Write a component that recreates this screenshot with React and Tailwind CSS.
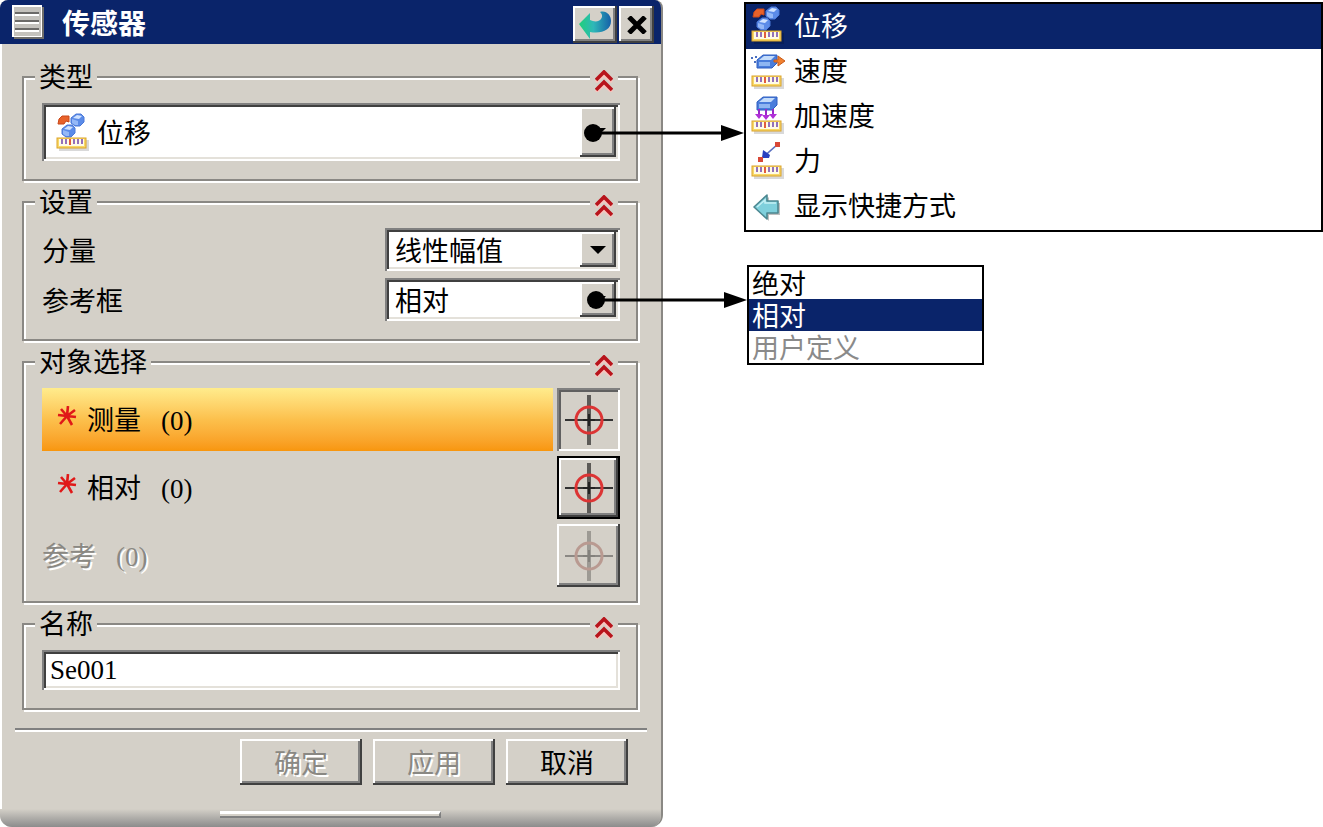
import { useState } from 'react'

const sunken = 'shadow-[inset_2px_2px_0_#808080,inset_-2px_-2px_0_#fff,inset_4px_4px_0_#404040,inset_-4px_-4px_0_#e4e1da]'
const raised = 'shadow-[inset_-2px_-2px_0_#404040,inset_2px_2px_0_#fff,inset_-4px_-4px_0_#808080]'
const embossed = 'text-[#8a8883] [text-shadow:2px_2px_0_#fff]'

function Ruler() {
  return (
    <g>
      <rect x="3" y="27" width="30" height="11" fill="#000" opacity="0.15" />
      <rect x="1" y="25" width="29" height="10" fill="#f8d868" stroke="#dba32a" />
      <rect x="3" y="26" width="25" height="7" fill="#fffbe6" />
      <path d="M6 26v5M10 26v5M18 26v5M22 26v5M26 26v5" stroke="#7a4fb0" strokeWidth="1.6" />
      <path d="M14 26v6" stroke="#e04a2a" strokeWidth="1.8" />
    </g>
  )
}

function Cube({ x, y }) {
  return (
    <g transform={`translate(${x} ${y})`}>
      <path d="M0 4L5 0H10L13 3V8L9 12H4L0 9Z" fill="#5b8be8" stroke="#4a78d8" strokeLinejoin="round" />
      <path d="M2 4L6 1L11 2L8 5Z" fill="#cfe2ff" />
      <path d="M1 5L7 7V11H4L1 9Z" fill="#94b8f7" />
    </g>
  )
}

function Block({ x, y }) {
  return (
    <g transform={`translate(${x} ${y})`}>
      <path d="M0 5L6 0H20V8L15 13H0Z" fill="#4a7ddb" stroke="#2f5fc0" strokeLinejoin="round" />
      <path d="M2 5L7 1H18L14 5Z" fill="#c4dcfa" />
      <path d="M2 7H13V11H2Z" fill="#8fb6f2" />
    </g>
  )
}

function Icon({ kind }) {
  return (
    <svg className="h-[38px] w-[34px] shrink-0" viewBox="0 0 34 38" aria-hidden="true">
      {kind === 'displacement' && (
        <g>
          <path d="M2 11L3 6L6 3H13V9L10 8L8 11Z" fill="#e8622a" stroke="#c9481a" strokeLinejoin="round" />
          <Cube x={15} y={1} />
          <Cube x={6} y={12} />
          <Ruler />
        </g>
      )}
      {kind === 'velocity' && (
        <g>
          <path d="M0 7h2M3 11h2M4 6h2" stroke="#4a6fc0" strokeWidth="2" />
          <Block x={6} y={4} />
          <path d="M23 9H27V5L34 10L27 15V11H23Z" fill="#f08030" stroke="#c85a18" strokeLinejoin="round" />
          <Ruler />
        </g>
      )}
      {kind === 'acceleration' && (
        <g>
          <Block x={6} y={1} />
          <path d="M8 13v7M15 13v9M22 13v7" stroke="#9a28c8" strokeWidth="2" />
          <path d="M4 18h8l-4 5zM11 19h8l-4 5zM18 18h8l-4 5z" fill="#b030d8" />
          <Ruler />
        </g>
      )}
      {kind === 'force' && (
        <g>
          <path d="M27 3L10 18" stroke="#5a70c0" strokeWidth="1.6" />
          <path d="M11 17L12 9L15 11L19 14L18 17Z" fill="#2840c0" />
          <rect x="24" y="1" width="5" height="5" fill="#d84838" />
          <rect x="7" y="16" width="5" height="5" fill="#d84838" />
          <Ruler />
        </g>
      )}
      {kind === 'shortcut' && (
        <g>
          <path d="M5 22L18 11V17H29V29H18V35Z" fill="#000" opacity="0.25" />
          <path d="M3 21L16 9V15H27V27H16V33Z" fill="#7fd0dc" stroke="#4c8790" strokeWidth="1.6" strokeLinejoin="round" />
          <path d="M6 21L14 14V17H25" fill="none" stroke="#c5f0f4" strokeWidth="1.5" />
        </g>
      )}
    </svg>
  )
}

function Target({ disabled }) {
  return (
    <svg className="h-[52px] w-[50px]" viewBox="0 0 50 52" opacity={disabled ? 0.45 : 1} aria-hidden="true">
      <path d="M25 1V51" stroke="#5c5a57" strokeWidth="4" />
      <path d="M1 26H49" stroke="#333" strokeWidth="2" />
      <circle cx="25" cy="26" r="13" fill="none" stroke={disabled ? '#9a5a50' : '#dc3434'} strokeWidth="3" />
      <path d="M19 26H31M25 20V32" stroke="#222" strokeWidth="2" />
    </svg>
  )
}

function Star() {
  return (
    <svg className="mb-2 h-5 w-5 shrink-0" viewBox="0 0 20 20" aria-hidden="true">
      <path d="M10 10L11 0M10 10L18 4M10 10L19 11M10 10L15 19M10 10L3 18M10 10L1 9M10 10L4 3" stroke="#e01818" strokeWidth="2.6" />
    </svg>
  )
}

function Group({ title, children, className = 'pb-[18px]' }) {
  return (
    <div className="relative">
      <fieldset className={`min-w-0 border-2 border-[#8a8884] pr-4 pl-[18px] shadow-[2px_2px_0_#fff,inset_2px_2px_0_#fff] ${className}`}>
        <legend className="-ml-[7px] h-[30px] bg-[#d4d0c8] px-1 leading-[28px]">{title}</legend>
        <div className="pt-[11px]">{children}</div>
      </fieldset>
      <button type="button" aria-label={`收起${title}`} className="absolute top-0 right-5 flex h-[34px] w-7 items-center justify-center bg-[#d4d0c8]">
        <svg className="mt-1 h-[22px] w-[18px]" viewBox="0 0 18 22" fill="none" aria-hidden="true">
          <path d="M1 12L9 5L17 12M1 22L9 15L17 22" stroke="#f8c4be" strokeWidth="3" />
          <path d="M1 10L9 2L17 10M1 20L9 12L17 20" stroke="#b8141c" strokeWidth="3.6" />
        </svg>
      </button>
    </div>
  )
}

function Combo({ id, label, icon, options, value, onChange, className }) {
  return (
    <div className={`flex items-stretch bg-white p-1 ${sunken} ${className}`}>
      {icon && <div className="flex items-center pr-[1px] pl-[10px]"><Icon kind={icon} /></div>}
      <select
        id={id} aria-label={label} value={value} onChange={(e) => onChange(e.target.value)}
        className="min-w-0 flex-1 appearance-none bg-transparent pl-[6px] outline-none"
      >
        {options.map((o) => <option key={o}>{o}</option>)}
      </select>
      <span className={`pointer-events-none flex w-9 items-center justify-center bg-[#d4d0c8] ${raised}`}>
        <svg className="h-2 w-4" viewBox="0 0 16 8" aria-hidden="true"><path d="M0 0H16L8 8Z" /></svg>
      </span>
    </div>
  )
}

// line with a round start and an arrow head, reaching back from a list to its combo box
function Connector({ className }) {
  return (
    <svg className={`pointer-events-none absolute right-full mr-[2px] h-5 w-40 ${className}`} viewBox="0 0 160 20" aria-hidden="true">
      <circle cx="9" cy="10" r="9" />
      <path d="M9 10H142" stroke="#000" strokeWidth="3" />
      <path d="M137 2L160 10L137 18Z" />
    </svg>
  )
}

const types = [
  ['displacement', '位移'],
  ['velocity', '速度'],
  ['acceleration', '加速度'],
  ['force', '力'],
  ['shortcut', '显示快捷方式'],
]

const targets = [
  {
    name: '测量', required: true,
    row: 'bg-linear-to-b from-[#ffec8c] via-[#fcc04c] to-[#f8960c]',
    button: 'shadow-[inset_2px_2px_0_#808080,inset_-2px_-2px_0_#fff,inset_4px_4px_0_#606060]',
  },
  {
    name: '相对', required: true, row: '',
    button: 'border-2 border-black shadow-[inset_-2px_-2px_0_#404040,inset_2px_2px_0_#fff,inset_-4px_-4px_0_#808080]',
  },
  { name: '参考', required: false, row: '', button: raised },
]

export default function App() {
  const [type, setType] = useState('位移')
  const [component, setComponent] = useState('线性幅值')
  const [frame, setFrame] = useState('相对')
  const [name, setName] = useState('Se001')

  return (
    <main className="flex min-h-screen items-start gap-[81px] bg-white font-['Noto_Sans_CJK_SC',sans-serif] text-[27px] leading-8 text-black">
      <form className="min-w-0 flex-[661] overflow-hidden rounded-t-lg rounded-b-xl border-r-2 border-[#8a8884] bg-[#d4d0c8]" onSubmit={(e) => e.preventDefault()}>
        <header className="-mr-[2px] flex h-11 items-center bg-[#0a246a] pr-[9px] pl-3">
          <svg className="h-[34px] w-8" viewBox="0 0 32 34" aria-hidden="true">
            <rect x="2" y="2" width="30" height="32" fill="#6f6e6b" />
            <rect width="30" height="32" fill="#fff" />
            <rect x="2" y="2" width="27" height="29" fill="#c4c2bd" />
            <path d="M3 8H27M3 16H27M3 24H27" stroke="#6b6a68" strokeWidth="2" />
            <path d="M3 10H27M3 18H27M3 26H27" stroke="#fff" strokeWidth="2" />
          </svg>
          <h1 className="ml-[18px] flex-1 text-[28px] font-bold text-white">传感器</h1>
          <div className="flex gap-[2px] pt-[5px]">
            <button type="button" aria-label="重置" className={`flex h-[37px] w-11 items-center justify-center bg-[#d4d0c8] ${raised}`}>
              <svg className="h-[30px] w-[34px]" viewBox="0 0 34 30" aria-hidden="true">
                <defs>
                  <linearGradient id="reset" x1="0" x2="1">
                    <stop offset="0" stopColor="#1fd07a" />
                    <stop offset="0.45" stopColor="#2fb8b8" />
                    <stop offset="1" stopColor="#1560a8" />
                  </linearGradient>
                </defs>
                <path d="M1 14L12 3V10C16 12 21 12 23 9C25 6 24 4 22 2C28 0 33 5 33 11C33 20 24 24 12 22V29Z" fill="url(#reset)" />
              </svg>
            </button>
            <button type="button" aria-label="关闭" className={`flex h-[37px] w-[35px] items-center justify-center bg-[#d4d0c8] ${raised}`}>
              <svg className="h-[18px] w-5" viewBox="0 0 20 18" aria-hidden="true">
                <path d="M2 1L18 17M18 1L2 17" stroke="#000" strokeWidth="5" />
              </svg>
            </button>
          </div>
        </header>

        <div className="border-l-2 border-white pb-6">
          <div className="flex flex-col gap-[6px] pt-[18px] pr-[23px] pl-5">
            <Group title="类型">
              <Combo label="类型" icon="displacement" options={types.map((t) => t[1])} value={type} onChange={setType} className="h-[58px]" />
            </Group>

            <Group title="设置">
              <div className="flex flex-col gap-[7px]">
                <div className="flex items-center justify-between">
                  <label htmlFor="component">分量</label>
                  <Combo id="component" options={['线性幅值']} value={component} onChange={setComponent} className="h-[43px] w-[235px]" />
                </div>
                <div className="flex items-center justify-between">
                  <label htmlFor="frame">参考框</label>
                  <Combo id="frame" options={['绝对', '相对', '用户定义']} value={frame} onChange={setFrame} className="h-[43px] w-[235px]" />
                </div>
              </div>
            </Group>

            <Group title="对象选择" className="pb-[14px]">
              <div className="flex flex-col gap-[5px]">
                {targets.map((t) => (
                  <div key={t.name} className="flex h-[63px] gap-1">
                    <div className={`flex flex-1 items-center gap-[10px] ${t.row} ${t.required ? 'pl-[15px]' : embossed}`}>
                      {t.required && <Star />}
                      <span>{t.name}<span className="ml-5 font-['Liberation_Serif',serif]">(0)</span></span>
                    </div>
                    <button type="button" aria-label={`选择${t.name}`} disabled={!t.required} className={`flex w-[63px] items-center justify-center ${t.button}`}>
                      <Target disabled={!t.required} />
                    </button>
                  </div>
                ))}
              </div>
            </Group>

            <Group title="名称">
              <input
                aria-label="名称" value={name} onChange={(e) => setName(e.target.value)}
                className={`block h-10 w-full bg-white px-2 font-['Liberation_Serif',serif] outline-none ${sunken}`}
              />
            </Group>
          </div>

          <hr className="mt-[18px] mr-[14px] ml-[13px] h-1 border-t-2 border-b-2 border-t-[#808080] border-b-white" />

          <div className="mt-[7px] flex justify-end gap-[11px] pr-[33px]">
            <button type="button" disabled className={`h-[46px] w-[122px] ${raised} ${embossed}`}>确定</button>
            <button type="button" disabled className={`h-[46px] w-[122px] ${raised} ${embossed}`}>应用</button>
            <button type="button" className={`h-[46px] w-[122px] ${raised}`}>取消</button>
          </div>
        </div>

        <footer className="flex h-[18px] justify-center bg-linear-to-b from-[#d4d0c8] to-[#8c8c8c]">
          <div className="mt-[2px] h-[7px] w-1/3 border-t-3 border-r-2 border-b-2 border-t-white border-r-[#808080] border-b-[#808080] bg-[#d4d0c8]" />
        </footer>
      </form>

      <aside className="min-w-0 flex-[579] pt-[2px]">
        <div className="relative border-2 border-black pb-[1px]">
          <Connector className="top-[119px]" />
          <ul>
            {types.map(([kind, label]) => (
              <li key={kind} className={`flex h-[45px] items-center gap-[9px] pb-[3px] pl-[5px] ${label === type ? 'bg-[#0a246a] text-white' : ''}`}>
                <Icon kind={kind} />
                <span>{label}</span>
              </li>
            ))}
          </ul>
        </div>

        <div className="relative mt-[33px] ml-[3px] w-[237px] border-2 border-black">
          <Connector className="top-[23px]" />
          <ul>
            {['绝对', '相对', '用户定义'].map((o) => (
              <li key={o} className={`pl-[3px] ${o === frame ? 'bg-[#0a246a] text-white' : ''} ${o === '用户定义' ? 'text-[#8a8a8a]' : ''}`}>{o}</li>
            ))}
          </ul>
        </div>
      </aside>
    </main>
  )
}
